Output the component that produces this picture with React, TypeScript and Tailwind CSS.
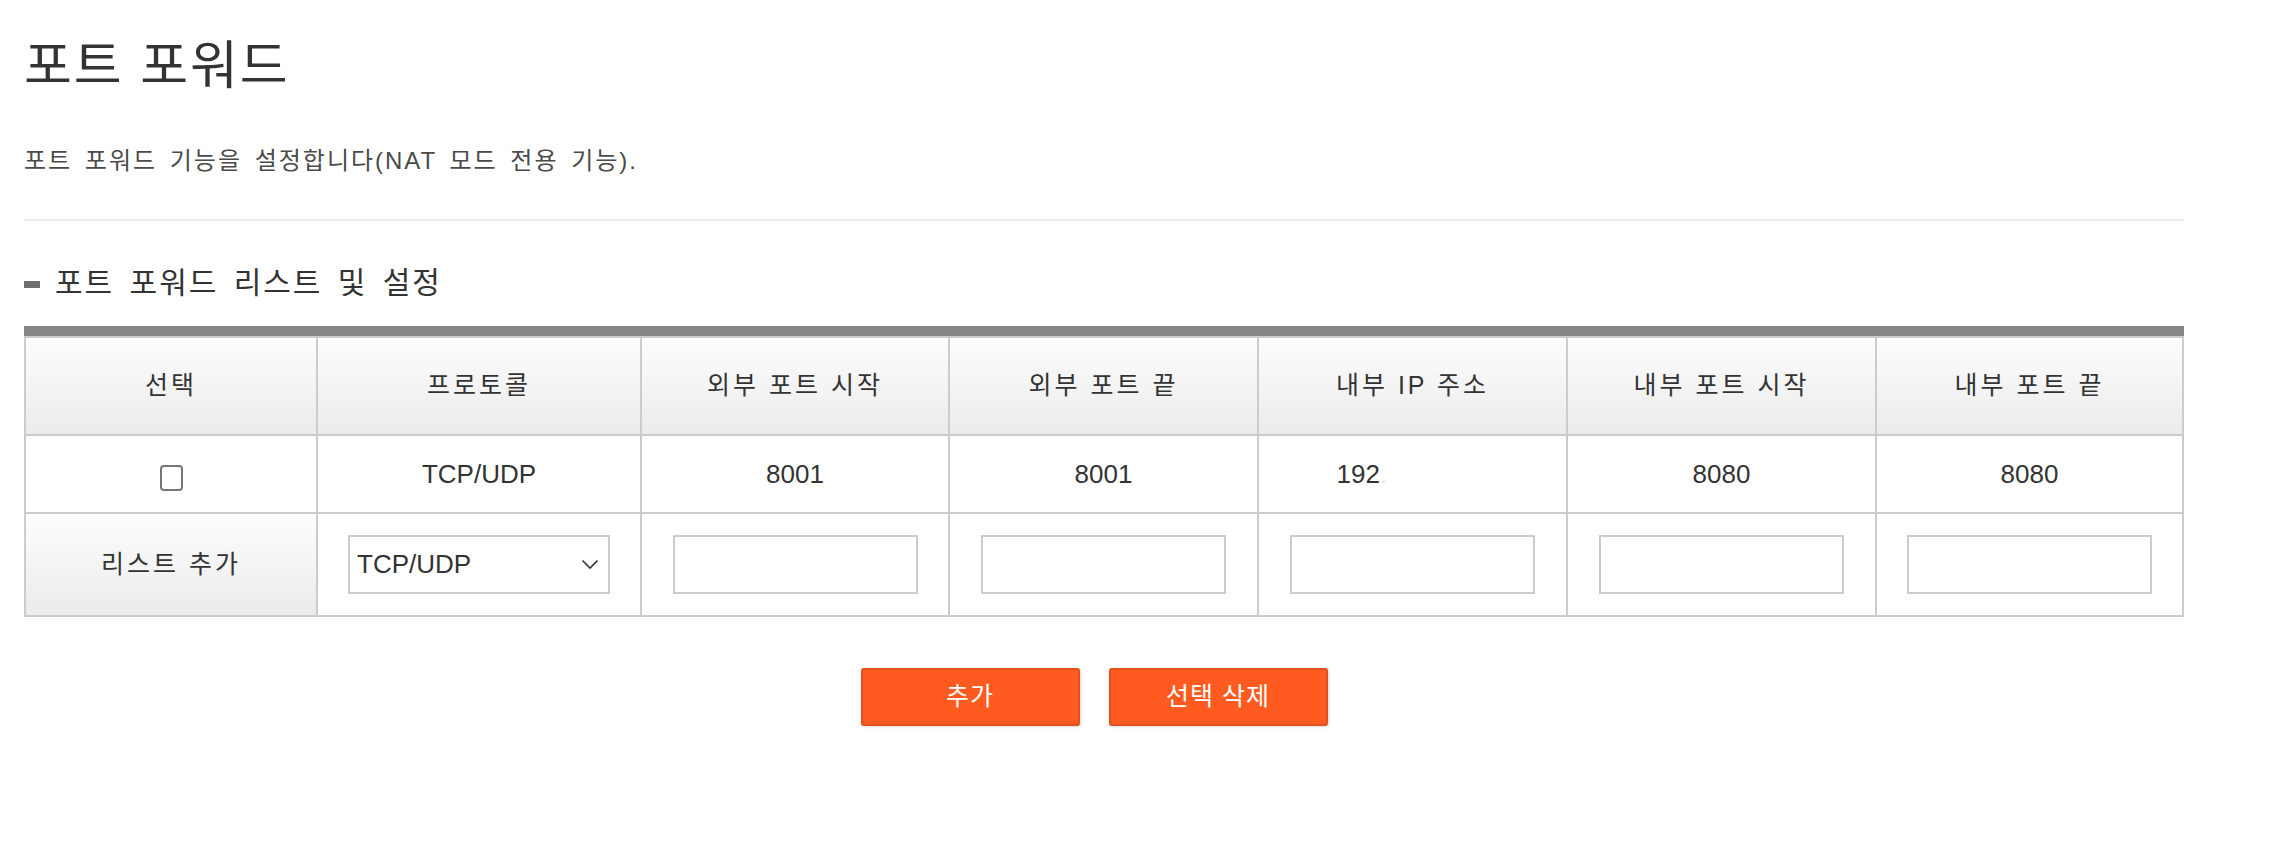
import React from 'react';

const font = { fontFamily: '"Liberation Sans", "Noto Sans CJK KR", sans-serif' };

const cols = 'grid grid-cols-[292px_324px_308px_309px_309px_309px_305px]';

const headers = ['선택', '프로토콜', '외부 포트 시작', '외부 포트 끝', '내부 IP 주소', '내부 포트 시작', '내부 포트 끝'];

function HeadCell({ children, last }: { children: React.ReactNode; last?: boolean }) {
  return (
    <div
      className={`flex items-center justify-center border-b-2 border-[#cccccc] bg-gradient-to-b from-[#fdfdfd] to-[#ebebeb] text-[25px] tracking-[3px] text-[#333] ${last ? '' : 'border-r-2'}`}
    >
      {children}
    </div>
  );
}

function Cell({ children, last, className = '' }: { children?: React.ReactNode; last?: boolean; className?: string }) {
  return (
    <div className={`flex items-center justify-center border-b-2 border-[#cccccc] bg-white text-[26px] text-[#333] ${last ? '' : 'border-r-2'} ${className}`}>
      {children}
    </div>
  );
}

function TextBox() {
  return <input type="text" className="h-[59px] w-[245px] border-2 border-[#cccccc] bg-white px-2 text-[25px] outline-none" />;
}

export default function App() {
  return (
    <div className="min-h-[852px] bg-white px-6 text-[#333]" style={font}>
      <div className="w-[2160px]">
        <h1 className="mt-[36px] text-[52px] font-normal leading-[60px] tracking-[2px] text-[#333]">포트 포워드</h1>
        <p className="mt-[49px] text-[24px] leading-[32px] tracking-[2px] text-[#4a4a4a] [word-spacing:4px]">
          포트 포워드 기능을 설정합니다(NAT 모드 전용 기능).
        </p>

        <div className="mt-[42px] h-[2px] bg-[#ebebeb]" />

        {/* section title */}
        <div className="mt-[42px] flex h-[40px] items-center gap-[15px]">
          <span className="mt-[2px] h-[7px] w-[16px] bg-[#6d6d6d]" />
          <h2 className="text-[30px] font-normal leading-[40px] tracking-[2px] text-[#333] [word-spacing:5px]">포트 포워드 리스트 및 설정</h2>
        </div>

        {/* table */}
        <div className="mt-[23px] h-[10px] bg-[#898785]" />
        <div className="border-x-2 border-t-2 border-[#cccccc]">
          <div className={`${cols} h-[98px]`}>
            {headers.map((h, i) => (
              <HeadCell key={h} last={i === headers.length - 1}>{h}</HeadCell>
            ))}
          </div>

          <div className={`${cols} h-[78px]`}>
            <Cell>
              <span className="mt-[8px] block h-[26px] w-[23px] rounded-[4px] border-2 border-[#767676] bg-white" />
            </Cell>
            <Cell>TCP/UDP</Cell>
            <Cell>8001</Cell>
            <Cell>8001</Cell>
            <Cell>
              <span>
                192<span className="text-[#e6e6e6]">.</span>
                <span className="text-transparent">168.0.10</span>
              </span>
            </Cell>
            <Cell>8080</Cell>
            <Cell last>8080</Cell>
          </div>

          <div className={`${cols} h-[103px]`}>
            <HeadCell>리스트 추가</HeadCell>
            <Cell>
              <div className="relative">
                <select className="h-[59px] w-[262px] appearance-none border-2 border-[#cccccc] bg-white pl-[7px] text-[26px] text-[#333] outline-none" style={font} defaultValue="TCP/UDP">
                  <option>TCP/UDP</option>
                  <option>TCP</option>
                  <option>UDP</option>
                </select>
                <svg className="pointer-events-none absolute right-[11px] top-[24px]" width="18" height="11" viewBox="0 0 18 11" fill="none">
                  <path d="M1.5 1.5 L9 9 L16.5 1.5" stroke="#333" strokeWidth="1.6" />
                </svg>
              </div>
            </Cell>
            <Cell><TextBox /></Cell>
            <Cell><TextBox /></Cell>
            <Cell><TextBox /></Cell>
            <Cell><TextBox /></Cell>
            <Cell last><TextBox /></Cell>
          </div>
        </div>

        {/* buttons */}
        <div className="mt-[51px] flex justify-center gap-[29px] pr-[20px]">
          <button className="h-[58px] w-[219px] rounded-[3px] border-2 border-[#e2511d] bg-[#ff5a20] text-[25px] tracking-[1px] text-white shadow-[1px_1px_3px_rgba(0,0,0,0.15)]">
            추가
          </button>
          <button className="h-[58px] w-[219px] rounded-[3px] border-2 border-[#e2511d] bg-[#ff5a20] text-[25px] tracking-[1px] text-white shadow-[1px_1px_3px_rgba(0,0,0,0.15)]">
            선택 삭제
          </button>
        </div>
      </div>
    </div>
  );
}
